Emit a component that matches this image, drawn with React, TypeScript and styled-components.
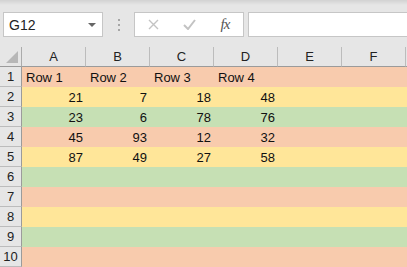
import React from "react";
import styled, { createGlobalStyle } from "styled-components";

const Global = createGlobalStyle`
  html, body { margin: 0; padding: 0; background: #e6e6e6; overflow: hidden; }
  body { font-family: "Liberation Sans", Arial, sans-serif; }
`;

const Page = styled.div`
  width: 407px;
  height: 267px;
  overflow: hidden;
  background: #e6e6e6;
`;

const FormulaBar = styled.div`
  height: 47px;
  box-sizing: border-box;
  padding: 12px 0 0 3px;
  display: flex;
  align-items: flex-start;
  background: linear-gradient(#d2d2d2 0px, #e6e6e6 5px, #e6e6e6 100%);
`;

const NameBox = styled.div`
  width: 100px;
  height: 25px;
  box-sizing: border-box;
  border: 1px solid #c6c6c6;
  background: #fff;
  display: flex;
  align-items: center;
  padding: 0 0 0 5px;
  font-size: 14px;
  color: #222;
  position: relative;
`;

const Caret = styled.span`
  position: absolute;
  right: 6px;
  top: 10px;
  width: 0;
  height: 0;
  border-left: 4px solid transparent;
  border-right: 4px solid transparent;
  border-top: 4px solid #666;
`;

const Grip = styled.div`
  width: 31px;
  height: 25px;
  display: flex;
  flex-direction: column;
  align-items: center;
  justify-content: center;
  gap: 3px;
`;

const GripDot = styled.span`
  width: 2px;
  height: 2px;
  background: #a6a6a6;
`;

const ButtonBox = styled.div`
  width: 110px;
  height: 25px;
  box-sizing: border-box;
  border: 1px solid #c6c6c6;
  background: #fff;
  display: flex;
  align-items: center;
`;

const IconButton = styled.div<{ $w: number }>`
  width: ${(p) => p.$w}px;
  height: 23px;
  display: flex;
  align-items: center;
  justify-content: center;
`;

const Fx = styled.span`
  font-family: "Liberation Serif", "Times New Roman", serif;
  font-style: italic;
  font-size: 15px;
  color: #555;
  letter-spacing: -1px;
`;

const FormulaInput = styled.div`
  flex: 1;
  margin-left: 4px;
  height: 25px;
  box-sizing: border-box;
  border: 1px solid #c6c6c6;
  border-right: none;
  background: #fff;
`;

const Sheet = styled.div`
  display: grid;
  grid-template-columns: 22px repeat(6, 64px) 1fr;
  grid-template-rows: 20px repeat(10, 20px);
`;

const Corner = styled.div`
  background: #e6e6e6;
  box-sizing: border-box;
  border-right: 1px solid #ababab;
  border-bottom: 1px solid #9b9b9b;
  position: relative;
`;

const CornerTri = styled.span`
  position: absolute;
  right: 3px;
  bottom: 3px;
  width: 0;
  height: 0;
  border-left: 12px solid transparent;
  border-bottom: 12px solid #b7b7b7;
`;

const ColHead = styled.div`
  background: #e6e6e6;
  box-sizing: border-box;
  border-right: 1px solid #bcbcbc;
  border-bottom: 1px solid #9b9b9b;
  display: flex;
  align-items: center;
  justify-content: center;
  font-size: 13px;
  color: #222;
`;

const RowHead = styled.div`
  background: #e6e6e6;
  box-sizing: border-box;
  border-right: 1px solid #9b9b9b;
  border-bottom: 1px solid #bcbcbc;
  display: flex;
  align-items: center;
  justify-content: center;
  font-size: 13px;
  color: #222;
`;

const Cell = styled.div<{ $bg: string; $num?: boolean }>`
  background: ${(p) => p.$bg};
  display: flex;
  align-items: flex-end;
  justify-content: ${(p) => (p.$num ? "flex-end" : "flex-start")};
  padding: 0 3px 1px 4px;
  box-sizing: border-box;
  font-size: 13px;
  color: #111;
  white-space: nowrap;
  overflow: visible;
  line-height: 16px;
`;

const colors = ["#f8cbad", "#ffe699", "#c6e0b4"];
const cols = ["A", "B", "C", "D", "E", "F"];
const data: (string | number)[][] = [
  ["Row 1", "Row 2", "Row 3", "Row 4", "", ""],
  [21, 7, 18, 48, "", ""],
  [23, 6, 78, 76, "", ""],
  [45, 93, 12, 32, "", ""],
  [87, 49, 27, 58, "", ""],
];

export default function App() {
  return (
    <Page>
      <Global />
      <FormulaBar>
        <NameBox>
          G12
          <Caret />
        </NameBox>
        <Grip>
          <GripDot />
          <GripDot />
          <GripDot />
        </Grip>
        <ButtonBox>
          <IconButton $w={36}>
            <svg width="11" height="11" viewBox="0 0 11 11">
              <path d="M1 1L10 10M10 1L1 10" stroke="#c3c3c3" strokeWidth="1.4" fill="none" />
            </svg>
          </IconButton>
          <IconButton $w={36}>
            <svg width="13" height="11" viewBox="0 0 13 11">
              <path d="M1 6L5 10L12 1" stroke="#c3c3c3" strokeWidth="2" fill="none" />
            </svg>
          </IconButton>
          <IconButton $w={36}>
            <Fx>fx</Fx>
          </IconButton>
        </ButtonBox>
        <FormulaInput />
      </FormulaBar>
      <Sheet>
        <Corner>
          <CornerTri />
        </Corner>
        {cols.map((c) => (
          <ColHead key={c}>{c}</ColHead>
        ))}
        <ColHead />
        {Array.from({ length: 10 }, (_, r) => {
          const bg = colors[r % 3];
          const row = data[r] || ["", "", "", "", "", ""];
          return (
            <React.Fragment key={r}>
              <RowHead>{r + 1}</RowHead>
              {row.map((v, i) => (
                <Cell key={i} $bg={bg} $num={typeof v === "number"}>
                  {v}
                </Cell>
              ))}
              <Cell $bg={bg} />
            </React.Fragment>
          );
        })}
      </Sheet>
    </Page>
  );
}
